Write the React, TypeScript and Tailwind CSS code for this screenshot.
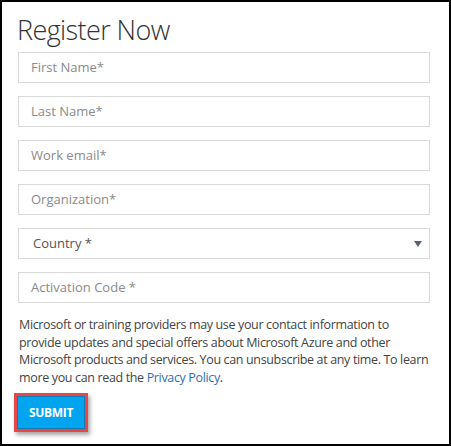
import React from "react";

const font = { fontFamily: '"Open Sans", "Noto Sans", Arial, sans-serif' };

function Field({ label }: { label: string }) {
  return (
    <div className="h-[31px] w-full border border-[#d9d9d9] bg-white flex items-center pl-[12px] text-[13px] text-[#8a8a8a]">
      {label}
    </div>
  );
}

export default function App() {
  return (
    <div
      className="w-[451px] h-[446px] border-2 border-black bg-white box-border pl-[16px] pr-[19px]"
      style={font}
    >
      <h1 className="text-[27px] font-light text-[#333] leading-[34px] pt-[11px] -ml-[1px] tracking-[-0.6px]">
        Register Now
      </h1>
      <div className="mt-[5px] flex flex-col gap-[13px]">
        <Field label="First Name*" />
        <Field label="Last Name*" />
        <Field label="Work email*" />
        <Field label="Organization*" />
        <div className="h-[31px] w-full border border-[#d9d9d9] bg-white flex items-center justify-between pl-[14px] pr-[7px] text-[13px] text-[#555]">
          <span>Country *</span>
          <svg width="8" height="6" viewBox="0 0 8 6">
            <path d="M0 0 H8 L4 6 Z" fill="#5a6270" />
          </svg>
        </div>
        <Field label="Activation Code *" />
      </div>
      <p className="mt-[13px] whitespace-nowrap text-[12.5px] leading-[17.5px] text-[#444] tracking-[-0.35px] pl-[1px]">
        Microsoft or training providers may use your contact information to
        <br />
        provide updates and special offers about Microsoft Azure and other
        <br />
        Microsoft products and services. You can unsubscribe at any time. To learn
        <br />
        more you can read the <a className="text-[#2f6fb0]">Privacy Policy</a>.
      </p>
      <div className="mt-[7px] -ml-[4px] inline-block border-[3px] border-[#e8474a] shadow-[2px_3px_4px_rgba(0,0,0,0.35)]">
        <div className="w-[68px] h-[33px] bg-[#00a4ef] border border-[#0b7fb5] flex items-center justify-center text-white text-[12px] font-bold tracking-[-0.3px]">
          SUBMIT
        </div>
      </div>
    </div>
  );
}
